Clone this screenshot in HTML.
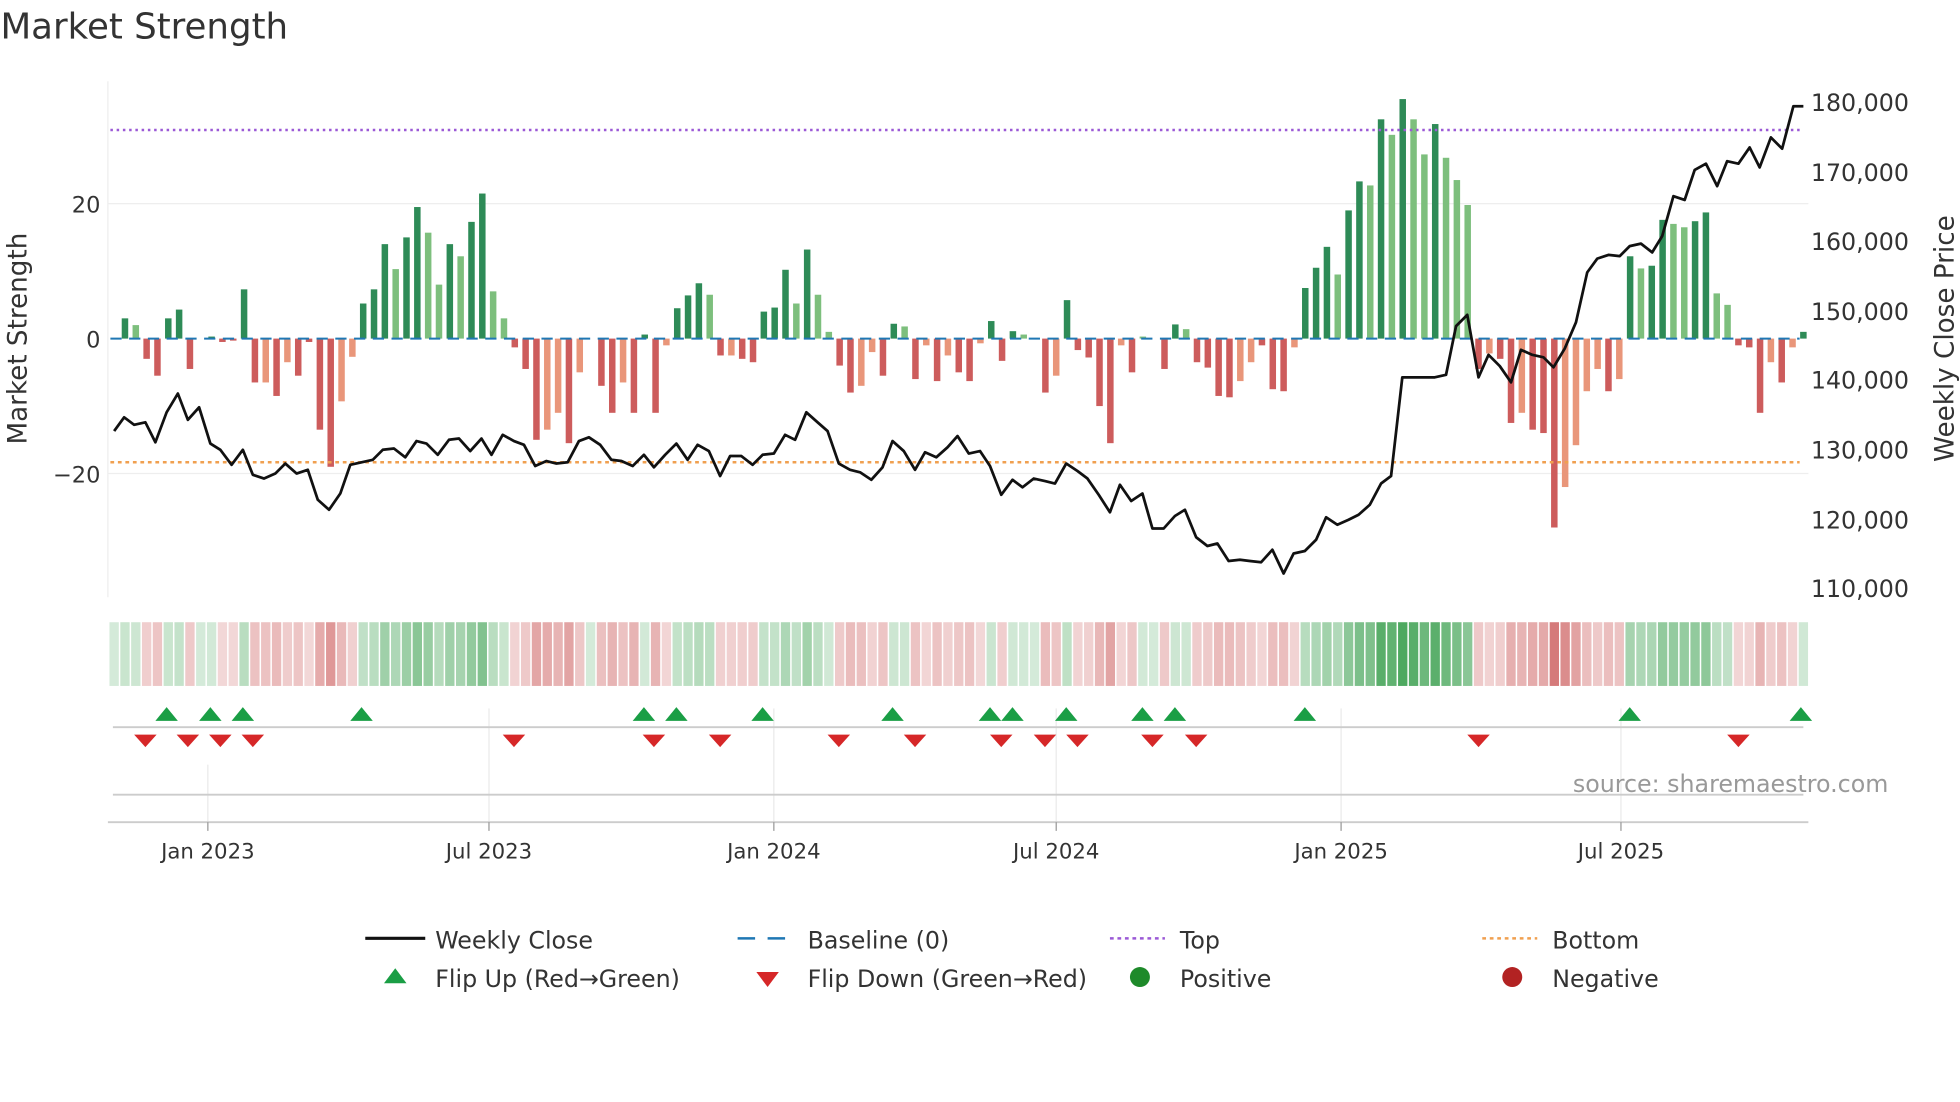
<!DOCTYPE html>
<html><head><meta charset="utf-8"><style>
html,body{margin:0;padding:0;background:#fff;width:1960px;height:1102px;overflow:hidden}
svg{display:block;font-family:"DejaVu Sans","Liberation Sans",sans-serif}
</style></head><body>
<svg id="s" xmlns="http://www.w3.org/2000/svg" width="1960" height="1102" viewBox="0 0 1568 882">
<text x="0" y="31" font-size="28.5" fill="#333">Market Strength</text>
<line x1="86" y1="163" x2="1447" y2="163" stroke="#eee" stroke-width="1"/>
<line x1="86" y1="379" x2="1447" y2="379" stroke="#eee" stroke-width="1"/>
<line x1="86" y1="65" x2="86" y2="478" stroke="#eee" stroke-width="1"/>
<g id="bars"></g>
<line x1="88" y1="271" x2="1440" y2="271" stroke="#1f77b4" stroke-width="1.6" stroke-dasharray="9,6"/>
<line x1="88" y1="104" x2="1440" y2="104" stroke="#9b59d6" stroke-width="2" stroke-dasharray="2,3"/>
<line x1="88" y1="370" x2="1440" y2="370" stroke="#f0a050" stroke-width="2" stroke-dasharray="3,3"/>
<polyline id="pl" fill="none" stroke="#111" stroke-width="2.2" stroke-linejoin="round"/>
<g font-size="18" fill="#333" text-anchor="end">
<text x="80" y="170">20</text><text x="80" y="278">0</text><text x="80" y="386">−20</text>
</g>
<g font-size="19" fill="#333">
<text x="1449" y="89">180,000</text><text x="1449" y="145">170,000</text><text x="1449" y="200">160,000</text><text x="1449" y="256">150,000</text><text x="1449" y="311">140,000</text><text x="1449" y="367">130,000</text><text x="1449" y="423">120,000</text><text x="1449" y="478">110,000</text>
</g>
<text transform="translate(21,271) rotate(-90)" font-size="21" fill="#333" text-anchor="middle">Market Strength</text>
<text transform="translate(1563,271) rotate(-90)" font-size="21" fill="#333" text-anchor="middle">Weekly Close Price</text>
<g id="heat"></g>
<g stroke="#eaeaea" stroke-width="1">
<line x1="166" y1="612" x2="166" y2="658"/><line x1="391" y1="567" x2="391" y2="658"/><line x1="619" y1="567" x2="619" y2="658"/><line x1="845" y1="567" x2="845" y2="658"/><line x1="1073" y1="567" x2="1073" y2="658"/><line x1="1297" y1="567" x2="1297" y2="658"/>
</g>
<line x1="90" y1="582" x2="1443" y2="582" stroke="#ccc" stroke-width="1.5"/>
<line x1="90" y1="636" x2="1443" y2="636" stroke="#ccc" stroke-width="1.5"/>
<line x1="86" y1="658" x2="1447" y2="658" stroke="#ccc" stroke-width="1.5"/>
<g stroke="#999" stroke-width="1"><line x1="166" y1="658" x2="166" y2="665"/><line x1="391" y1="658" x2="391" y2="665"/><line x1="619" y1="658" x2="619" y2="665"/><line x1="845" y1="658" x2="845" y2="665"/><line x1="1073" y1="658" x2="1073" y2="665"/><line x1="1297" y1="658" x2="1297" y2="665"/></g>
<g id="flips"></g>
<text x="1511" y="634" font-size="19" fill="#999" text-anchor="end">source: sharemaestro.com</text>
<g font-size="17" fill="#333" text-anchor="middle">
<text x="166" y="687">Jan 2023</text><text x="391" y="687">Jul 2023</text><text x="619" y="687">Jan 2024</text><text x="845" y="687">Jul 2024</text><text x="1073" y="687">Jan 2025</text><text x="1297" y="687">Jul 2025</text>
</g>
<g font-size="19" fill="#333">
<line x1="292" y1="751" x2="340" y2="751" stroke="#111" stroke-width="2.5"/><text x="348" y="759">Weekly Close</text>
<line x1="590" y1="751" x2="634" y2="751" stroke="#1f77b4" stroke-width="2" stroke-dasharray="14,10"/><text x="646" y="759">Baseline (0)</text>
<line x1="888" y1="751" x2="932" y2="751" stroke="#9b59d6" stroke-width="2" stroke-dasharray="3,3"/><text x="944" y="759">Top</text>
<line x1="1186" y1="751" x2="1230" y2="751" stroke="#f0a050" stroke-width="2" stroke-dasharray="3,3"/><text x="1242" y="759">Bottom</text>
<polygon points="307,787 325,787 316,775" fill="#1a9e45"/><text x="348" y="790">Flip Up (Red→Green)</text>
<polygon points="605,778 623,778 614,790" fill="#d62728"/><text x="646" y="790">Flip Down (Green→Red)</text>
<circle cx="912" cy="782" r="8" fill="#1e8a2a"/><text x="944" y="790">Positive</text>
<circle cx="1210" cy="782" r="8" fill="#b22222"/><text x="1242" y="790">Negative</text>
</g>
</svg>
<script>
var NS="http://www.w3.org/2000/svg";
function el(p,t,a){var e=document.createElementNS(NS,t);for(var k in a)e.setAttribute(k,a[k]);p.appendChild(e);return e;}
var V="0,3,2l,-3,-5.5,3,4.3,-4.5,0,0.3,-0.5,-0.3,7.3,-6.5,-6.5l,-8.5,-3.5l,-5.5,-0.5,-13.5,-19,-9.3l,-2.7l,5.2,7.3,14,10.3l,15,19.5,15.7l,8l,14,12.2l,17.3,21.5,7l,3l,-1.3,-4.5,-15,-13.5l,-11l,-15.5,-5l,0,-7,-11,-6.5l,-11,0.6,-11,-1l,4.5,6.4,8.2,6.5l,-2.5,-2.5l,-3,-3.5,4,4.6,10.2,5.2l,13.2,6.5l,1l,-4,-8,-7l,-2l,-5.5,2.2,1.8l,-6,-1l,-6.3,-2.5l,-5,-6.3,-0.7l,2.6,-3.3,1.1,0.6l,0,-8,-5.5l,5.7,-1.7,-2.8,-10,-15.5,-1l,-5,0.3l,0,-4.5,2.1,1.4l,-3.5,-4.3,-8.5,-8.7,-6.3l,-3.5l,-1,-7.5,-7.8,-1.3l,7.5,10.5,13.6,9.5l,19,23.3,22.7l,32.5,30.2l,35.5,32.5l,27.3l,31.8,26.8l,23.5l,19.8l,-4.5,-2.2l,-3,-12.5,-11l,-13.5,-14,-28,-22l,-15.8l,-7.8l,-4.5l,-7.8,-6l,12.2,10.4l,10.8,17.6,17l,16.5l,17.4,18.7,6.7l,5l,-1,-1.3,-11,-3.5l,-6.5,-1.3l,1".split(",");
var bars=document.getElementById("bars"),heat=document.getElementById("heat");
var step=(1443-91)/(V.length-1);
V.forEach(function(s,i){
 var l=s.indexOf("l")>=0, v=parseFloat(s), x=91+step*i;
 var c=v>=0?(l?"#7dbf7d":"#2e8b57"):(l?"#e9967a":"#cd5c5c");
 var h=Math.abs(v)*5.4;
 if(h>0.5) el(bars,"rect",{x:x-2.6,y:v>=0?271-h:271,width:5.2,height:h,fill:c});
 var a=0.22+Math.min(Math.abs(v)/36,1)*0.7;
 el(heat,"rect",{x:x-step/2+0.6,y:498,width:step-1.2,height:51,fill:v>=0?"rgb(60,160,80)":"rgb(200,80,80)","fill-opacity":a.toFixed(2)});
});
var P=[[91,345],[99,334],[107,340],[116,338],[124,354],[133,330],[142,315],[150,336],[159,326],[168,355],[176,360],[185,372],[194,360],[202,380],[211,383],[220,379],[228,371],[237,379],[246,376],[254,400],[263,408],[272,395],[280,372],[289,370],[298,368],[306,360],[315,359],[324,366],[333,353],[341,355],[350,364],[359,352],[367,351],[376,361],[385,351],[393,364],[402,348],[411,353],[419,356],[428,373],[437,369],[445,371],[454,370],[463,353],[471,350],[480,356],[489,368],[497,369],[506,373],[515,364],[523,374],[532,364],[541,355],[550,368],[558,356],[567,361],[576,381],[584,365],[593,365],[602,372],[610,364],[619,363],[628,348],[636,352],[645,330],[654,338],[662,345],[671,371],[680,376],[688,378],[697,384],[706,374],[714,353],[723,361],[732,376],[740,362],[749,366],[758,358],[766,349],[775,363],[784,361],[792,373],[801,396],[810,384],[818,390],[827,383],[836,385],[844,387],[853,371],[862,377],[870,383],[879,396],[888,410],[896,388],[905,401],[914,395],[922,423],[931,423],[940,413],[948,408],[957,430],[966,437],[974,435],[983,449],[992,448],[1000,449],[1009,450],[1018,440],[1027,459],[1035,443],[1044,441],[1053,432],[1061,414],[1070,420],[1079,416],[1087,412],[1096,404],[1105,387],[1113,381],[1122,302],[1131,302],[1139,302],[1148,302],[1157,300],[1165,261],[1174,252],[1183,302],[1191,284],[1200,293],[1209,306],[1217,280],[1226,284],[1235,286],[1243,294],[1252,279],[1261,258],[1270,218],[1278,207],[1287,204],[1296,205],[1304,197],[1313,195],[1322,202],[1330,189],[1339,157],[1348,160],[1356,136],[1365,131],[1374,149],[1382,129],[1391,131],[1400,118],[1408,134],[1417,110],[1426,119],[1435,85],[1443,85]];
document.getElementById("pl").setAttribute("points",P.map(function(p){return p.join(",")}).join(" "));
var f=document.getElementById("flips");
[133,168,194,289,515,541,610,714,792,810,853,914,940,1044,1304,1441].forEach(function(x){el(f,"polygon",{points:(x-9)+",577 "+(x+9)+",577 "+x+",566",fill:"#1a9e45"});});
[116,150,176,202,411,523,576,671,732,801,836,862,922,957,1183,1391].forEach(function(x){el(f,"polygon",{points:(x-9)+",588 "+(x+9)+",588 "+x+",598",fill:"#d62728"});});
</script>
</body></html>
